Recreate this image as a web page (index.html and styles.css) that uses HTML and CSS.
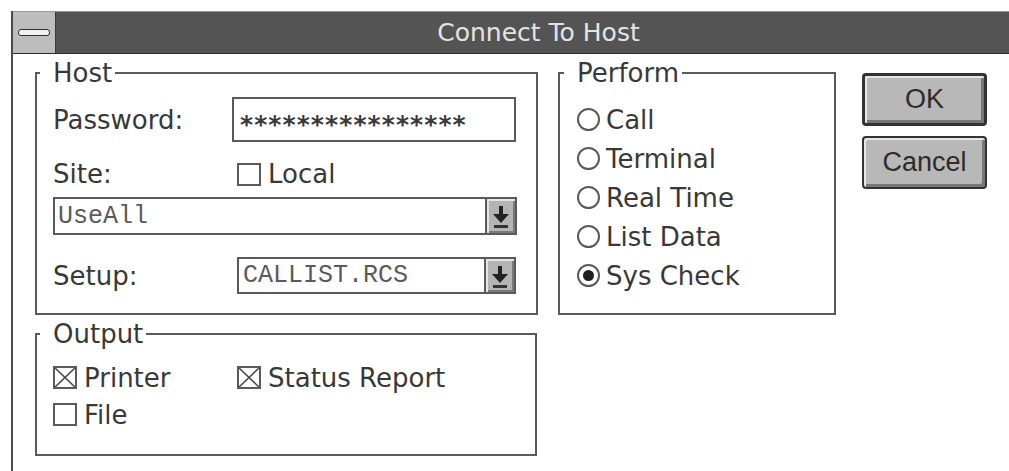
FILE: index.html
```html
<!DOCTYPE html>
<html lang="en">
<head>
<meta charset="utf-8">
<title>Connect To Host</title>
<link rel="stylesheet" href="styles.css">
</head>
<body>
<div class="window">
  <div class="titlebar">
    <div class="sysmenu"><span class="sysbar"></span></div>
    <div class="caption">Connect To Host</div>
  </div>

  <div class="client">
    <div class="left-col">
      <fieldset class="group host">
        <legend>Host</legend>
        <div class="row pw-row">
          <span class="lbl">Password:</span>
          <div class="edit pw">****************</div>
        </div>
        <div class="row site-row">
          <span class="lbl">Site:</span>
          <span class="check shift"><span class="box"></span>Local</span>
        </div>
        <div class="combo wide">
          <span class="combo-text">UseAll</span>
          <span class="drop">
            <svg width="26" height="34" viewBox="0 0 26 34"><rect x="11" y="7" width="4" height="9" fill="#222"/><polygon points="5,15 21,15 13,24" fill="#222"/><rect x="6" y="26" width="14" height="3" fill="#333"/></svg>
          </span>
        </div>
        <div class="row setup-row">
          <span class="lbl">Setup:</span>
          <div class="combo narrow shift">
            <span class="combo-text">CALLIST.RCS</span>
            <span class="drop">
              <svg width="26" height="33" viewBox="0 0 26 33"><rect x="11" y="7" width="4" height="9" fill="#222"/><polygon points="5,15 21,15 13,24" fill="#222"/><rect x="6" y="26" width="14" height="3" fill="#333"/></svg>
            </span>
          </div>
        </div>
      </fieldset>

      <fieldset class="group output">
        <legend>Output</legend>
        <div class="out-grid">
          <span class="check"><span class="box"><svg viewBox="0 0 20 19"><path d="M0 0L20 19M20 0L0 19" stroke="#4a4a4a" stroke-width="1.6"/></svg></span>Printer</span>
          <span class="check"><span class="box"><svg viewBox="0 0 20 19"><path d="M0 0L20 19M20 0L0 19" stroke="#4a4a4a" stroke-width="1.6"/></svg></span>Status Report</span>
          <span class="check"><span class="box"></span>File</span>
        </div>
      </fieldset>
    </div>

    <fieldset class="group perform">
      <legend>Perform</legend>
      <div class="radio"><span class="dot"></span>Call</div>
      <div class="radio"><span class="dot"></span>Terminal</div>
      <div class="radio"><span class="dot"></span>Real Time</div>
      <div class="radio"><span class="dot"></span>List Data</div>
      <div class="radio"><span class="dot on"></span>Sys Check</div>
    </fieldset>

    <div class="buttons">
      <button class="btn default">OK</button>
      <button class="btn">Cancel</button>
    </div>
  </div>
</div>
</body>
</html>
```

FILE: styles.css
```css
html, body {
  margin: 0;
  height: 100%;
  background: #ffffff;
  overflow: hidden;
}

body {
  font-family: "DejaVu Sans", "Noto Sans", sans-serif;
  font-size: 26px;
  color: #383838;
}

/* dialog frame */
.window {
  margin: 11px 0 0 11px;
  border-left: 2px solid #4c4c4c;
  min-height: 460px;
}

.titlebar {
  display: flex;
  height: 43px;
  box-sizing: border-box;
  background: #545454;
  border-top: 1px solid #9a9a9a;
  border-bottom: 1px solid #2e2e2e;
}

.sysmenu {
  width: 42px;
  display: flex;
  align-items: center;
  justify-content: center;
  background: #bdbdbd;
  border-right: 1px solid #3a3a3a;
}

.sysbar {
  width: 30px;
  height: 5px;
  border: 1px solid #2e2e2e;
  border-radius: 3px;
  background: #f2f2f2;
}

.caption {
  flex: 1;
  text-align: center;
  padding-left: 12px;
  font-size: 25px;
  line-height: 41px;
  color: #e4e4e4;
}

/* body of the dialog */
.client {
  display: flex;
  align-items: flex-start;
  padding: 4px 0 0 22px;
}

.left-col {
  display: flex;
  flex-direction: column;
  gap: 4px;
}

.group {
  margin: 0;
  min-width: 0;
  border: 2px solid #5a5a5a;
  box-sizing: border-box;
}

.group legend {
  padding: 0 3px 0 13px;
  margin-left: -13px;
  line-height: 30px;
}

.host {
  width: 503px;
  padding: 9px 20px 19px 16px;
}

.output {
  width: 502px;
  padding: 10px 20px 21px 16px;
}

.perform {
  width: 278px;
  margin-left: 20px;
  padding: 12px 10px 18px 17px;
}

.row {
  display: flex;
  align-items: center;
}

.lbl {
  width: 179px;
  flex: none;
}

.shift {
  margin-left: 5px;
}

.pw-row { height: 45px; }
.site-row { height: 36px; margin-top: 14px; }
.setup-row { height: 37px; margin-top: 22px; }

.edit {
  width: 284px;
  height: 45px;
  box-sizing: border-box;
  border: 2px solid #5a5a5a;
}

/* masked password characters */
.pw {
  padding: 11px 0 0 6px;
  font-family: "DejaVu Sans", sans-serif;
  font-weight: bold;
  font-size: 25px;
  line-height: 30px;
  letter-spacing: 1.1px;
  color: #3a3a3a;
}

/* drop-down lists */
.combo {
  display: flex;
  box-sizing: border-box;
  border: 2px solid #5a5a5a;
}

.combo.wide {
  width: 464px;
  height: 38px;
  margin-top: 5px;
}

.combo.narrow {
  width: 279px;
  height: 37px;
}

.combo-text {
  flex: 1;
  display: flex;
  align-items: center;
  padding-left: 3px;
  font-family: "Liberation Mono", monospace;
  font-size: 25px;
  color: #5a5a5a;
}

.narrow .combo-text { padding-left: 4px; }

.drop {
  width: 28px;
  display: flex;
  align-items: center;
  justify-content: center;
  background: #b4b4b4;
  border-left: 2px solid #5a5a5a;
  box-shadow: inset 2px 2px 0 #e4e4e4, inset -2px -2px 0 #7a7a7a;
}

/* check boxes */
.check {
  display: inline-flex;
  align-items: center;
  gap: 7px;
  white-space: nowrap;
}

.box {
  width: 24px;
  height: 23px;
  box-sizing: border-box;
  border: 2px solid #5a5a5a;
  display: flex;
}

.box svg {
  width: 100%;
  height: 100%;
}

.out-grid {
  display: grid;
  grid-template-columns: 184px auto;
  grid-auto-rows: 37px;
  align-items: center;
}

/* radio buttons */
.radio {
  display: flex;
  align-items: center;
  gap: 6px;
  height: 39px;
}

.dot {
  width: 23px;
  height: 23px;
  box-sizing: border-box;
  border: 2px solid #5a5a5a;
  border-radius: 50%;
  display: flex;
  align-items: center;
  justify-content: center;
}

.dot.on::after {
  content: "";
  width: 11px;
  height: 11px;
  border-radius: 50%;
  background: #1e1e1e;
}

/* push buttons */
.buttons {
  display: flex;
  flex-direction: column;
  gap: 10px;
  margin: 15px 0 0 26px;
}

.btn {
  width: 125px;
  height: 53px;
  box-sizing: border-box;
  border: 2px solid #333;
  border-radius: 4px;
  background: #b8b8b8;
  box-shadow: inset 2px 2px 0 #e6e6e6, inset -3px -3px 0 #777;
  font-family: "Liberation Sans", Arial, sans-serif;
  font-size: 27px;
  color: #2c2c2c;
  padding: 0;
}

.btn.default {
  border-width: 3px;
}
```
